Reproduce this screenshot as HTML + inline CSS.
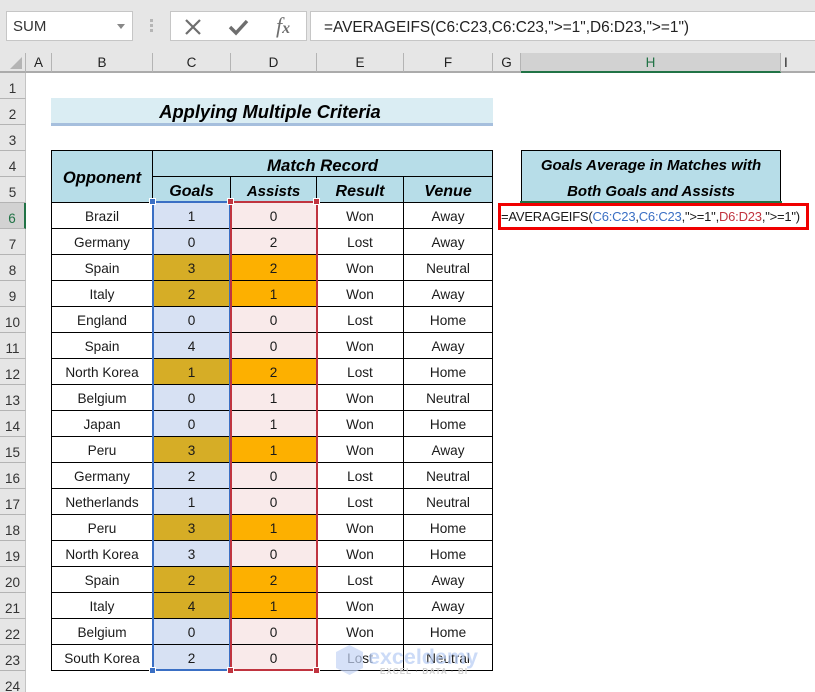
<!DOCTYPE html>
<html><head><meta charset="utf-8">
<style>
html,body{margin:0;padding:0;background:#fff}
#p{position:relative;width:815px;height:692px;overflow:hidden;background:#fff;font-family:"Liberation Sans",sans-serif;color:#1a1a1a}
#p div{position:absolute;box-sizing:border-box}
.box{background:#fff;border:1px solid #c6c6c6}
.ch{top:53px;height:20px;background:#e6e6e6;border-right:1px solid #b4b4b4;border-bottom:2px solid #ababab;text-align:center;font-size:13.5px;line-height:20px;color:#222}
.rh{left:0;width:26px;height:26px;background:#e6e6e6;border-bottom:1px solid #b4b4b4;border-right:1px solid #c4c4c4;text-align:center;font-size:13.5px;line-height:31px;color:#333}
table{position:absolute;left:51px;top:150px;border-collapse:collapse;table-layout:fixed;width:442px;font-size:13.6px;color:#1a1a1a}
td{border:1px solid #000;height:23px;padding:2px 0 0;text-align:center;line-height:23px;white-space:nowrap;overflow:hidden}
td.h{background:#b7dde8;font-weight:bold;font-style:italic;font-size:16px;color:#000;line-height:25px;height:25px;padding:0}
td.h span{position:relative;display:block;height:25px}
.c{background:#d7e1f3}.a{background:#f9eaea}.g{background:#d6ad26}.o{background:#fdb000}
.hd{width:7px;height:7px;border:1px solid #fff}
</style></head><body><div id="p">
<div style="left:0;top:0;width:815px;height:53px;background:#e6e6e6"></div>
<div class="box" style="left:6px;top:11px;width:127px;height:30px;font-size:15px;line-height:29px;padding-left:6px;color:#333">SUM</div>
<div style="left:117px;top:24px;width:0;height:0;border-left:4px solid transparent;border-right:4px solid transparent;border-top:5px solid #888"></div>
<div style="left:150px;top:19px;width:3px;height:3px;background:#b5b5b5"></div>
<div style="left:150px;top:24px;width:3px;height:3px;background:#b5b5b5"></div>
<div style="left:150px;top:29px;width:3px;height:3px;background:#b5b5b5"></div>
<div class="box" style="left:170px;top:11px;width:137px;height:30px"></div>
<svg style="position:absolute;left:170px;top:11px" width="137" height="30" fill="none">
<path d="M16 9L30 23M30 9L16 23" stroke="#6e6e6e" stroke-width="2.2"/>
<path d="M60 16L66 22L77 10" stroke="#6e6e6e" stroke-width="3.4"/>
<text x="106" y="22" font-family="Liberation Serif" font-style="italic" font-size="22" fill="#6e6e6e">f<tspan font-size="16" font-weight="bold">x</tspan></text>
</svg>
<div class="box" style="left:310px;top:11px;width:505px;height:30px;border-right:0;font-size:15.4px;line-height:31px;padding-left:13px;color:#222;white-space:nowrap">=AVERAGEIFS(C6:C23,C6:C23,"&gt;=1",D6:D23,"&gt;=1")</div>

<div style="left:0;top:53px;width:26px;height:20px;background:#e6e6e6;border-right:1px solid #b4b4b4;border-bottom:2px solid #ababab"></div>
<div style="left:10px;top:57px;width:0;height:0;border-left:12px solid transparent;border-bottom:12px solid #b4b4b4"></div>
<div class="ch" style="left:26px;width:26px">A</div>
<div class="ch" style="left:52px;width:101px">B</div>
<div class="ch" style="left:153px;width:78px">C</div>
<div class="ch" style="left:231px;width:86px">D</div>
<div class="ch" style="left:317px;width:87px">E</div>
<div class="ch" style="left:404px;width:89px">F</div>
<div class="ch" style="left:493px;width:28px">G</div>
<div class="ch" style="left:521px;width:260px;background:#d2d2d2;border-bottom:2px solid #217346;color:#217346">H</div>
<div class="ch" style="left:781px;width:34px;border-right:0;text-align:left;padding-left:3px">I</div>

<div class="rh" style="top:73px">1</div>
<div class="rh" style="top:99px">2</div>
<div class="rh" style="top:125px">3</div>
<div class="rh" style="top:151px">4</div>
<div class="rh" style="top:177px">5</div>
<div class="rh" style="top:203px;background:#d2d2d2;border-right:2px solid #217346;color:#217346">6</div>
<div class="rh" style="top:229px">7</div>
<div class="rh" style="top:255px">8</div>
<div class="rh" style="top:281px">9</div>
<div class="rh" style="top:307px">10</div>
<div class="rh" style="top:333px">11</div>
<div class="rh" style="top:359px">12</div>
<div class="rh" style="top:385px">13</div>
<div class="rh" style="top:411px">14</div>
<div class="rh" style="top:437px">15</div>
<div class="rh" style="top:463px">16</div>
<div class="rh" style="top:489px">17</div>
<div class="rh" style="top:515px">18</div>
<div class="rh" style="top:541px">19</div>
<div class="rh" style="top:567px">20</div>
<div class="rh" style="top:593px">21</div>
<div class="rh" style="top:619px">22</div>
<div class="rh" style="top:645px">23</div>
<div class="rh" style="top:671px">24</div>

<div style="left:51px;top:98px;width:442px;height:25px;background:#daedf3;text-align:center;font-weight:bold;font-style:italic;font-size:18.3px;line-height:27px;color:#000;padding-right:4px">Applying Multiple Criteria</div>
<div style="left:51px;top:123px;width:442px;height:3px;background:#a6bfdd"></div>

<table>
<colgroup><col style="width:101px"><col style="width:78px"><col style="width:86px"><col style="width:87px"><col style="width:89px"></colgroup>
<tr><td class="h" rowspan="2"><span style="top:1px;font-size:16.6px">Opponent</span></td><td class="h" colspan="4"><span style="top:2px;font-size:16.8px">Match Record</span></td></tr>
<tr><td class="h"><span style="top:2px">Goals</span></td><td class="h"><span style="top:2px;font-size:15px">Assists</span></td><td class="h"><span style="top:2px">Result</span></td><td class="h"><span style="top:2px">Venue</span></td></tr>
<tr><td>Brazil</td><td class="c">1</td><td class="a">0</td><td>Won</td><td>Away</td></tr>
<tr><td>Germany</td><td class="c">0</td><td class="a">2</td><td>Lost</td><td>Away</td></tr>
<tr><td>Spain</td><td class="g">3</td><td class="o">2</td><td>Won</td><td>Neutral</td></tr>
<tr><td>Italy</td><td class="g">2</td><td class="o">1</td><td>Won</td><td>Away</td></tr>
<tr><td>England</td><td class="c">0</td><td class="a">0</td><td>Lost</td><td>Home</td></tr>
<tr><td>Spain</td><td class="c">4</td><td class="a">0</td><td>Won</td><td>Away</td></tr>
<tr><td>North Korea</td><td class="g">1</td><td class="o">2</td><td>Lost</td><td>Home</td></tr>
<tr><td>Belgium</td><td class="c">0</td><td class="a">1</td><td>Won</td><td>Neutral</td></tr>
<tr><td>Japan</td><td class="c">0</td><td class="a">1</td><td>Won</td><td>Home</td></tr>
<tr><td>Peru</td><td class="g">3</td><td class="o">1</td><td>Won</td><td>Away</td></tr>
<tr><td>Germany</td><td class="c">2</td><td class="a">0</td><td>Lost</td><td>Neutral</td></tr>
<tr><td>Netherlands</td><td class="c">1</td><td class="a">0</td><td>Lost</td><td>Neutral</td></tr>
<tr><td>Peru</td><td class="g">3</td><td class="o">1</td><td>Won</td><td>Home</td></tr>
<tr><td>North Korea</td><td class="c">3</td><td class="a">0</td><td>Won</td><td>Home</td></tr>
<tr><td>Spain</td><td class="g">2</td><td class="o">2</td><td>Lost</td><td>Away</td></tr>
<tr><td>Italy</td><td class="g">4</td><td class="o">1</td><td>Won</td><td>Away</td></tr>
<tr><td>Belgium</td><td class="c">0</td><td class="a">0</td><td>Won</td><td>Home</td></tr>
<tr><td>South Korea</td><td class="c">2</td><td class="a">0</td><td>Lost</td><td>Neutral</td></tr>
</table>

<!-- range selection borders -->
<div style="left:152px;top:201px;width:79px;height:470px;border:2px solid #3a6fc4"></div>
<div style="left:230px;top:201px;width:88px;height:470px;border:2px solid #c0343f"></div>
<div class="hd" style="left:149px;top:198px;background:#3a6fc4"></div>
<div class="hd" style="left:149px;top:667px;background:#3a6fc4"></div>
<div class="hd" style="left:227px;top:198px;background:#c0343f"></div>
<div class="hd" style="left:227px;top:667px;background:#c0343f"></div>
<div class="hd" style="left:313px;top:198px;background:#c0343f"></div>
<div class="hd" style="left:313px;top:667px;background:#c0343f"></div>

<!-- result header -->
<div style="left:521px;top:150px;width:260px;height:52px;background:#b7dde8;border:1px solid #000;border-bottom:0;text-align:center;font-weight:bold;font-style:italic;font-size:15px;line-height:26px;color:#000;padding-top:2px">Goals Average in Matches with<br>Both Goals and Assists</div>
<div style="left:520px;top:201px;width:262px;height:2px;background:#217346"></div>
<!-- edit cell -->
<div style="left:498px;top:203px;width:311px;height:27px;background:#fff;border:3px solid #f00000;font-size:13px;line-height:21px;padding-left:0;white-space:nowrap;color:#1a1a1a;letter-spacing:-.21px">=AVERAGEIFS(<span style="color:#3a6fc4">C6:C23</span>,<span style="color:#3a6fc4">C6:C23</span>,"&gt;=1",<span style="color:#c0343f">D6:D23</span>,"&gt;=1")</div>

<!-- watermark -->
<svg style="position:absolute;left:334px;top:643px" width="150" height="40">
<path d="M2 9L15.5 2L29 9V25L15.5 32L2 25Z" fill="#c4d4f5" opacity=".7"/>
<text x="34" y="21" font-family="Liberation Sans" font-weight="bold" font-size="21.5" fill="#bcd0f5" opacity=".75">exceldemy</text>
<text x="46" y="31" font-family="Liberation Sans" font-weight="bold" font-size="8" letter-spacing="1.1" fill="#cfcfcf">EXCEL · DATA · BI</text>
</svg>
</div></body></html>
